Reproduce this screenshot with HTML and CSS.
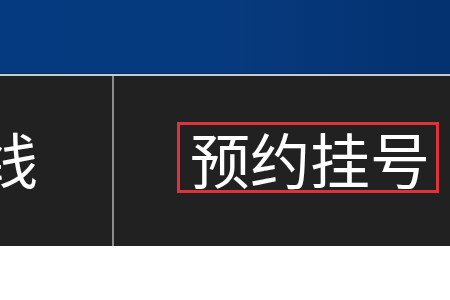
FILE: index.html
```html
<!DOCTYPE html>
<html lang="zh">
<head>
<meta charset="utf-8">
<link rel="stylesheet" href="styles.css">
</head>
<body>
<header class="banner"></header>
<div class="row">
  <div class="cell cell-first"><span class="label">在线</span></div>
  <div class="divider"></div>
  <div class="cell cell-second"><span class="label boxed">预约挂号</span></div>
</div>
</body>
</html>
```
FILE: styles.css
```css
html, body {
  margin: 0;
  padding: 0;
  background: #ffffff;
  overflow: hidden;
}
body {
  width: 450px;
  height: 300px;
  font-family: "Noto Sans CJK SC", "Noto Sans", sans-serif;
}
.banner {
  height: 73px;
  background: linear-gradient(90deg, #063a80 0%, #063a7e 50%, #04316f 100%);
  border-bottom: 1px solid #0c2a52;
}
.row {
  display: flex;
  height: 170px;
  border-top: 2px solid #c2ccd4;
  background: #212121;
  margin-left: -88px;
  width: 640px;
}
.cell {
  display: flex;
  align-items: center;
  color: #ffffff;
  padding-bottom: 7px;
  box-sizing: border-box;
}
.cell-first {
  width: 200px;
  justify-content: flex-end;
  padding-right: 74px;
}
.divider {
  width: 2px;
  background: #8c8c8c;
}
.cell-second {
  flex: 1;
  padding-left: 63px;
}
.label {
  font-size: 60px;
  font-weight: 400;
  line-height: 1;
  letter-spacing: 0;
}
.boxed {
  border: 3px solid #e0323a;
  padding: 3px 6px 2px 10px;
}
```
